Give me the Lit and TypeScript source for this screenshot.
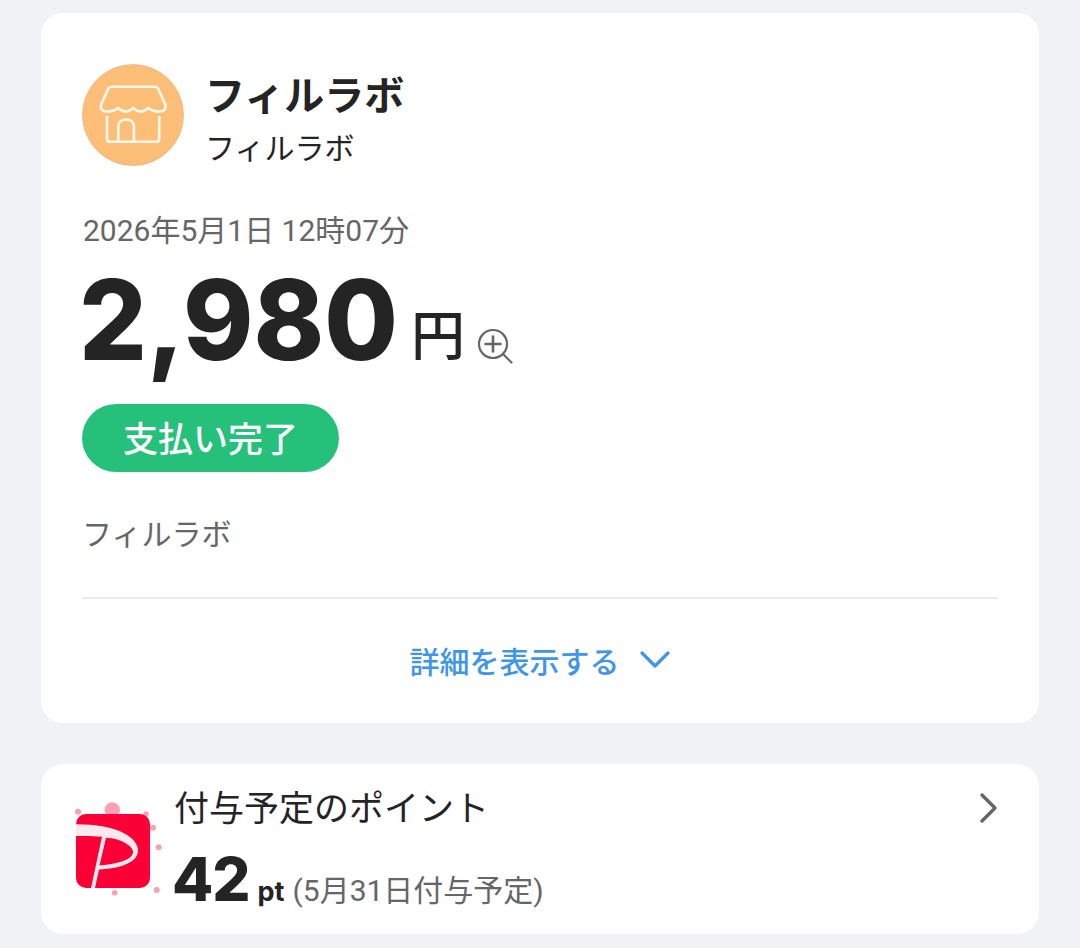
import { LitElement, html, css } from "lit";
import { customElement } from "lit/decorators.js";

@customElement("app-root")
export class AppRoot extends LitElement {
  static styles = css`
    :host {
      display: block;
      width: 1080px;
      height: 948px;
      overflow: hidden;
      background: #f0f2f6;
      font-family: Roboto, "Noto Sans CJK JP", sans-serif;
      color: #242424;
    }
    .page {
      display: flex;
      flex-direction: column;
      gap: 41px;
      padding: 13px 41px 0;
    }
    .card {
      background: #fff;
      border-radius: 22px;
    }
    .main {
      height: 710px;
      box-sizing: border-box;
      padding: 51px 41px 0;
      display: flex;
      flex-direction: column;
    }
    .head {
      display: flex;
      gap: 21px;
      height: 102px;
    }
    .avatar {
      width: 102px;
      height: 102px;
      flex: none;
      display: block;
    }
    .names {
      display: flex;
      flex-direction: column;
    }
    .name {
      font-size: 40px;
      font-weight: 700;
      line-height: 60px;
      margin-top: 3px;
    }
    .sub {
      font-size: 30px;
      line-height: 44px;
    }
    .date {
      font-size: 30px;
      line-height: 40px;
      color: #666;
      margin-top: 45px;
      margin-left: 1px;
    }
    .amount {
      display: flex;
      align-items: baseline;
      height: 120px;
      line-height: 120px;
      margin-top: 9px;
    }
    .value {
      display: inline-block;
      width: 319px;
      margin-left: -3px;
      white-space: nowrap;
      font-family: Inter, Roboto, sans-serif;
      font-size: 111px;
      font-weight: 800;
      transform: scaleX(0.96);
      transform-origin: left center;
    }
    .yen {
      align-self: flex-start;
      font-size: 54px;
      line-height: 56px;
      font-weight: 500;
      margin: 50px 0 0 13px;
    }
    .zoom {
      align-self: flex-start;
      width: 38px;
      height: 38px;
      margin: 67px 0 0 11px;
    }
    .pill {
      align-self: flex-start;
      width: 257px;
      height: 68px;
      box-sizing: border-box;
      padding-bottom: 3px;
      border-radius: 34px;
      background: #25c07a;
      color: #fff;
      font-size: 35px;
      font-weight: 500;
      display: flex;
      align-items: center;
      justify-content: center;
      margin-top: 24px;
    }
    .merchant {
      font-size: 30px;
      line-height: 44px;
      color: #666;
      margin-top: 41px;
    }
    .rule {
      height: 2px;
      background: #e9ebee;
      margin-top: 40px;
    }
    .more {
      display: flex;
      align-items: center;
      justify-content: center;
      gap: 19px;
      height: 122px;
      color: #3f95e8;
      font-size: 30px;
      font-weight: 500;
    }
    .chev {
      width: 32px;
      height: 20px;
    }
    .points {
      height: 170px;
      position: relative;
      display: flex;
      padding-left: 133px;
      box-sizing: border-box;
    }
    .logo {
      position: absolute;
      left: 30px;
      top: 34px;
      width: 92px;
      height: 100px;
    }
    .ptext {
      display: flex;
      flex-direction: column;
      flex: 1;
    }
    .ptitle {
      font-size: 35px;
      line-height: 50px;
      margin-top: 21px;
    }
    .pvals {
      display: flex;
      align-items: baseline;
      line-height: 76px;
      margin-top: 6px;
    }
    .pnum {
      font-family: Inter, Roboto, sans-serif;
      font-size: 60px;
      font-weight: 800;
      letter-spacing: -1px;
      margin-left: -2px;
    }
    .pt {
      font-family: Inter, Roboto, sans-serif;
      font-size: 27px;
      font-weight: 700;
      margin-left: 8px;
    }
    .pdate {
      font-size: 30px;
      color: #666;
      margin-left: 8px;
    }
    .arrow {
      position: absolute;
      right: 40px;
      top: 28px;
      width: 20px;
      height: 32px;
    }
  `;

  render() {
    return html`
      <div class="page">
        <section class="card main">
          <div class="head">
            <svg class="avatar" viewBox="0 0 102 102">
              <circle cx="51" cy="51" r="50.5" fill="#fdbf78" stroke="#e4ab6b" stroke-width="0.6" />
              <g fill="none" stroke="#fff8ee" stroke-width="2.6" stroke-linecap="round" stroke-linejoin="round">
                <path transform="translate(1.500 0)" d="M28.5 22.8H71.5c1.500 0 2.500.7 3.200 2l7 15.500c1.500 3.500-1 7.200-4.500 7.200-5 0-9.500-1-12.500-3.600-3 2.500-5 3.600-7.500 3.600s-4.500-1.100-7.500-3.600c-3 2.500-5 3.600-7.500 3.600s-4.500-1.100-7.500-3.600c-3 2.600-7.500 3.600-12.500 3.600-3.500 0-6-3.700-4.500-7.200l7-15.500c.7-1.300 1.700-2 3.800-2z" />
                <path d="M25 53V75c0 1.600 1 2.700 2.700 2.700H74.500c1.600 0 2.700-1 2.700-2.700V53" />
                <path d="M36.300 77.700V62.500c0-4 3-7 7.800-7s7.800 3 7.800 7V77.700" />
              </g>
            </svg>
            <div class="names">
              <div class="name">フィルラボ</div>
              <div class="sub">フィルラボ</div>
            </div>
          </div>
          <div class="date">2026年5月1日 12時07分</div>
          <div class="amount">
            <span class="value">2,980</span>
            <span class="yen">円</span>
            <svg class="zoom" viewBox="0 0 38 38" fill="none" stroke="#666" stroke-width="2.200" stroke-linecap="round">
              <circle cx="17" cy="17" r="14" />
              <path d="M17 9.500v15M9.500 17h15" stroke-width="2.600" />
              <path d="M27.500 27.500l8 8" />
            </svg>
          </div>
          <div class="pill">支払い完了</div>
          <div class="merchant">フィルラボ</div>
          <div class="rule"></div>
          <div class="more">
            <span>詳細を表示する</span>
            <svg class="chev" viewBox="0 0 32 20" fill="none" stroke="#3f95e8" stroke-width="3.200" stroke-linecap="round" stroke-linejoin="round">
              <path d="M3 3l13 13L29 3" />
            </svg>
          </div>
        </section>
        <section class="card points">
          <svg class="logo" viewBox="0 0 92 100">
            <g fill="#f8a0b4">
              <circle cx="41.3" cy="12" r="7.700" />
              <circle cx="7" cy="13.700" r="3" />
              <circle cx="75" cy="16" r="2.800" />
              <circle cx="82" cy="29.700" r="3" />
              <circle cx="87.700" cy="49.300" r="3" />
              <circle cx="85.700" cy="92" r="3" />
              <circle cx="43.700" cy="94.700" r="2.800" />
            </g>
            <rect x="5" y="16" width="74" height="74" rx="10" fill="#fa0037" />
            <path fill="#fde8ee" fill-rule="evenodd" d="M5 26.300C25 26.300 42 29 53 35.300 62 40 67 46 67 52.500 67 62 56 67 45 69.500 39 70.800 33 71 28 71.500L24 90H20L31 38.700C22 37.800 14 37.800 5 38ZM35 39.700C43 40 50 42 55 45.500 60 48.500 62.500 52 62 55 60 62 48 65.500 28.500 67.500Z" />
          </svg>
          <div class="ptext">
            <div class="ptitle">付与予定のポイント</div>
            <div class="pvals">
              <span class="pnum">42</span>
              <span class="pt">pt</span>
              <span class="pdate">(5月31日付与予定)</span>
            </div>
          </div>
          <svg class="arrow" viewBox="0 0 20 32" fill="none" stroke="#666" stroke-width="3.400" stroke-linecap="round" stroke-linejoin="round">
            <path d="M3 3l13 13L3 29" />
          </svg>
        </section>
      </div>
    `;
  }
}
